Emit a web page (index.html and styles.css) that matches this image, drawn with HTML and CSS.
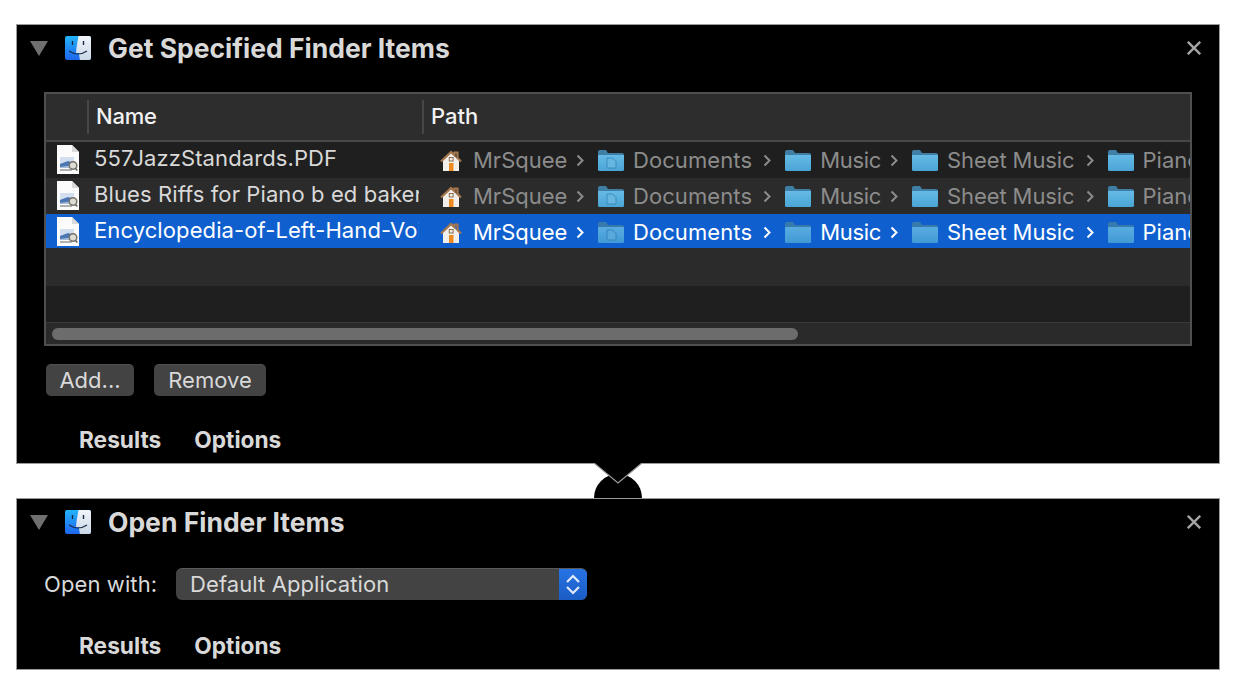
FILE: index.html
```html
<!DOCTYPE html>
<html lang="en">
<head>
    <meta charset="UTF-8">
    <title>Automator workflow</title>
    <link rel="stylesheet" href="styles.css">
</head>
<body>
    <svg class="defs" width="0" height="0">
        <defs>
            <linearGradient id="finderBlue" x1="0" y1="0" x2="0" y2="1">
                <stop offset="0" stop-color="#22b4fa"/>
                <stop offset="1" stop-color="#1e66ee"/>
            </linearGradient>
            <linearGradient id="finderPale" x1="0" y1="0" x2="0" y2="1">
                <stop offset="0" stop-color="#f1f5f9"/>
                <stop offset="1" stop-color="#c9d8e8"/>
            </linearGradient>
            <linearGradient id="folderFill" x1="0" y1="0" x2="0" y2="1">
                <stop offset="0" stop-color="#66bae4"/>
                <stop offset="1" stop-color="#4aa5d6"/>
            </linearGradient>
            <symbol id="finder" viewBox="0 0 26 24">
                <rect width="26" height="24" rx="2" fill="url(#finderBlue)"/>
                <path d="M13.500 0H24a2 2 0 0 1 2 2v20a2 2 0 0 1-2 2H15c-.6-2.800-.9-5-1-7h-3c.4-6 1.500-11 2.500-17z" fill="url(#finderPale)"/>
                <path d="M7.500 5v4M18.500 5v4" stroke="#1b2a44" stroke-width="1.400" fill="none"/>
                <path d="M4 15c5.500 3.800 12.500 3.800 18 0" stroke="#1b2a44" stroke-width="1.200" fill="none"/>
            </symbol>
            <symbol id="doc" viewBox="0 0 22 29">
                <path d="M0 0h15l7 7v22H0z" fill="#fbfbfb"/>
                <path d="M15 0l7 7h-7z" fill="#d9d9d9"/>
                <rect x="3" y="12" width="14" height="11" fill="#a9bedb"/>
                <path d="M3 12h14v4l-14 3z" fill="#d3dfee"/>
                <path d="M3 19l8-3 6 2v2l-14 2z" fill="#4d76b4"/>
                <path d="M3 24h12v2H3z" fill="#b0b0b0"/>
                <circle cx="16" cy="20.500" r="3.800" fill="#dcdcd4" stroke="#77746a" stroke-width="1.500"/>
                <path d="M18.500 23.500l1.800 2" stroke="#66635a" stroke-width="1.600"/>
            </symbol>
            <symbol id="home" viewBox="0 0 22 21">
                <path d="M3 10L11 3l8 7v11H3z" fill="#f2efea"/>
                <path d="M1 11.500L11 2l3.500 3.300V2.500h3v5.600L21 11.500" fill="none" stroke="#a5774e" stroke-width="2.200"/>
                <rect x="9" y="13" width="4.500" height="8" fill="#ec8a22"/>
                <rect x="9.300" y="7.500" width="3.800" height="3.500" fill="#f2efea" stroke="#8a6a4a" stroke-width="1"/>
            </symbol>
            <symbol id="folder" viewBox="0 0 26 22">
                <path d="M0 3a2 2 0 0 1 2-2h6l2 3h14a2 2 0 0 1 2 2v5H0z" fill="#3f7fa6"/>
                <path d="M0 6h26v14.500a1.500 1.500 0 0 1-1.500 1.500h-23A1.500 1.500 0 0 1 0 20.500z" fill="url(#folderFill)"/>
            </symbol>
            <symbol id="folderDoc" viewBox="0 0 26 22">
                <use href="#folder"/>
                <path d="M9 9h5.500L18 12.500V19H9z" fill="#66b6e0" stroke="#3a8cbd" stroke-width="1"/>
            </symbol>
            <symbol id="chevron" viewBox="0 0 8 13">
                <path d="M1.500 1.500L6.500 6.500 1.500 11.500" fill="none" stroke="currentColor" stroke-width="2"/>
            </symbol>
        </defs>
    </svg>

    <section class="action action-get">
        <header class="action-head">
            <span class="triangle"></span>
            <svg class="finder-icon"><use href="#finder"/></svg>
            <h2 class="action-title">Get Specified Finder Items</h2>
            <svg class="close-icon" viewBox="0 0 14 14"><path d="M.8 .8l12.400 12.400M13.200 .8L.8 13.200"/></svg>
        </header>

        <div class="table-frame">
            <div class="table-head">
                <div class="head-icon"></div>
                <div class="head-cell head-name">Name</div>
                <div class="head-cell head-path">Path</div>
            </div>

            <div class="row row-dark">
                <svg class="doc-icon"><use href="#doc"/></svg>
                <div class="name-cell">557JazzStandards.PDF</div>
                <div class="path-cell">
                    <svg class="home-icon"><use href="#home"/></svg><span class="crumb crumb-home">MrSquee</span><svg class="chev"><use href="#chevron"/></svg>
                    <svg class="folder-icon"><use href="#folderDoc"/></svg><span class="crumb crumb-docs">Documents</span><svg class="chev"><use href="#chevron"/></svg>
                    <svg class="folder-icon"><use href="#folder"/></svg><span class="crumb crumb-music">Music</span><svg class="chev"><use href="#chevron"/></svg>
                    <svg class="folder-icon"><use href="#folder"/></svg><span class="crumb crumb-sheet">Sheet Music</span><svg class="chev"><use href="#chevron"/></svg>
                    <svg class="folder-icon"><use href="#folder"/></svg><span class="crumb">Piano</span>
                </div>
            </div>
            <div class="row row-light">
                <svg class="doc-icon"><use href="#doc"/></svg>
                <div class="name-cell">Blues Riffs for Piano b ed baker</div>
                <div class="path-cell">
                    <svg class="home-icon"><use href="#home"/></svg><span class="crumb crumb-home">MrSquee</span><svg class="chev"><use href="#chevron"/></svg>
                    <svg class="folder-icon"><use href="#folderDoc"/></svg><span class="crumb crumb-docs">Documents</span><svg class="chev"><use href="#chevron"/></svg>
                    <svg class="folder-icon"><use href="#folder"/></svg><span class="crumb crumb-music">Music</span><svg class="chev"><use href="#chevron"/></svg>
                    <svg class="folder-icon"><use href="#folder"/></svg><span class="crumb crumb-sheet">Sheet Music</span><svg class="chev"><use href="#chevron"/></svg>
                    <svg class="folder-icon"><use href="#folder"/></svg><span class="crumb">Piano</span>
                </div>
            </div>
            <div class="row row-selected">
                <svg class="doc-icon"><use href="#doc"/></svg>
                <div class="name-cell">Encyclopedia-of-Left-Hand-Voicings</div>
                <div class="path-cell">
                    <svg class="home-icon"><use href="#home"/></svg><span class="crumb crumb-home">MrSquee</span><svg class="chev"><use href="#chevron"/></svg>
                    <svg class="folder-icon"><use href="#folderDoc"/></svg><span class="crumb crumb-docs">Documents</span><svg class="chev"><use href="#chevron"/></svg>
                    <svg class="folder-icon"><use href="#folder"/></svg><span class="crumb crumb-music">Music</span><svg class="chev"><use href="#chevron"/></svg>
                    <svg class="folder-icon"><use href="#folder"/></svg><span class="crumb crumb-sheet">Sheet Music</span><svg class="chev"><use href="#chevron"/></svg>
                    <svg class="folder-icon"><use href="#folder"/></svg><span class="crumb">Piano</span>
                </div>
            </div>
            <div class="row-empty row-empty-light"></div>
            <div class="row-empty row-empty-dark"></div>

            <div class="scroll-track"><div class="scroll-thumb"></div></div>
        </div>

        <div class="button-row">
            <button class="btn btn-add">Add...</button>
            <button class="btn btn-remove">Remove</button>
        </div>

        <div class="tabs">
            <span class="tab">Results</span>
            <span class="tab">Options</span>
        </div>

        <!-- Connector between the two actions -->
        <svg class="connector" viewBox="0 0 48 35" width="48" height="35">
            <circle cx="24" cy="35" r="24" fill="#000"/>
            <path d="M0 0h48L24 20z" fill="#000"/>
            <path d="M0 0L24 20 48 0" fill="none" stroke="#9a9a9a" stroke-width="1.200"/>
        </svg>
    </section>

    <section class="action action-open">
        <header class="action-head">
            <span class="triangle"></span>
            <svg class="finder-icon"><use href="#finder"/></svg>
            <h2 class="action-title">Open Finder Items</h2>
            <svg class="close-icon" viewBox="0 0 14 14"><path d="M.8 .8l12.400 12.400M13.200 .8L.8 13.200"/></svg>
        </header>

        <div class="open-row">
            <label class="open-label">Open with:</label>
            <div class="select">
                <span class="select-text">Default Application</span>
                <span class="select-arrows">
                    <svg viewBox="0 0 14 21" width="14" height="21"><path d="M1 8L7 2 13 8M1 13L7 19 13 13"/></svg>
                </span>
            </div>
        </div>

        <div class="tabs tabs-open">
            <span class="tab">Results</span>
            <span class="tab">Options</span>
        </div>
    </section>
</body>
</html>
```
FILE: styles.css
```css
body {
    margin: 0;
    padding: 24px 16px 0;
    background: #fff;
    font-family: "Inter", "Liberation Sans", sans-serif;
    color: #d9d9d9;
}

.defs {
    display: block;
    height: 0;
}

/* action blocks */
.action {
    position: relative;
    box-sizing: border-box;
    width: 1204px;
    background: #000;
    border: 1px solid #9c9c9c;
    padding: 0 27px 11px;
}

.action-open {
    margin-top: 34px;
}

.action-head {
    display: flex;
    align-items: center;
    height: 46px;
    margin-left: -14px;
}

.triangle {
    width: 0;
    height: 0;
    border-left: 9px solid transparent;
    border-right: 9px solid transparent;
    border-top: 15px solid #6f6f6f;
}

.finder-icon {
    width: 26px;
    height: 24px;
    margin-left: 17px;
}

.action-title {
    flex: 1;
    margin: 0 0 0 17px;
    font-size: 26.500px;
    font-weight: 700;
    color: #d9d9d9;
}

.close-icon {
    width: 14px;
    height: 14px;
    margin-right: -9px;
    fill: none;
    stroke: #a3a3a3;
    stroke-width: 2.400;
}

/* table */
.table-frame {
    box-sizing: border-box;
    width: 1148px;
    height: 254px;
    margin-top: 21px;
    border: 2px solid #4f4f4f;
    background: #2b2b2b;
}

.table-head {
    display: flex;
    height: 40px;
    padding-top: 6px;
    border-bottom: 2px solid #474747;
    background: #2d2d2d;
}

.head-icon {
    width: 41px;
}

.head-cell {
    height: 34px;
    line-height: 32px;
    padding-left: 7px;
    border-left: 2px solid #474747;
    font-size: 22px;
    font-weight: 500;
    color: #f2f2f2;
}

.head-name {
    width: 326px;
    letter-spacing: -.2px;
}

.row {
    display: flex;
    align-items: flex-start;
    overflow: hidden;
    height: 36px;
}

.row-dark {
    background: #1f1f1f;
}

.row-light {
    background: #2b2b2b;
}

.row-selected {
    height: 34px;
    background: #0f5fcf;
}

.doc-icon {
    flex: none;
    width: 22px;
    height: 29px;
    margin: 3px 0 0 11px;
}

.name-cell {
    flex: none;
    width: 325px;
    margin-left: 15px;
    overflow: hidden;
    white-space: nowrap;
    font-size: 22px;
    line-height: 32px;
    letter-spacing: .1px;
    color: #d9d9d9;
}

.path-cell {
    display: flex;
    align-items: flex-start;
    flex: 1;
    min-width: 0;
    overflow: hidden;
    padding-left: 21px;
    white-space: nowrap;
    font-size: 22px;
    line-height: 36px;
    color: #8c8c8c;
}

.row-selected .name-cell,
.row-selected .path-cell {
    color: #fff;
}

.row-selected .folder-icon {
    opacity: .85;
}

.home-icon {
    flex: none;
    width: 22px;
    height: 21px;
    margin-top: 8px;
}

.folder-icon {
    flex: none;
    width: 26px;
    height: 22px;
    margin-top: 7px;
}

.crumb {
    margin-left: 9px;
}

.crumb-home {
    margin: 0 -2.500px 0 11px;
}

.crumb-docs {
    letter-spacing: .1px;
}

.crumb-music {
    margin-right: -2px;
    letter-spacing: -.3px;
}

.crumb-sheet {
    letter-spacing: -.1px;
}

.chev {
    flex: none;
    width: 8px;
    height: 13px;
    margin: 12px 14px 0 11px;
}

.row-empty-light {
    height: 38px;
    background: #2b2b2b;
}

.row-empty-dark {
    height: 36px;
    background: #1f1f1f;
}

.scroll-track {
    box-sizing: border-box;
    height: 22px;
    padding: 5px 0 0 6px;
    border-top: 1px solid #3a3a3a;
    background: #2a2a2a;
}

.scroll-thumb {
    width: 746px;
    height: 12px;
    border-radius: 6px;
    background: #6c6c6c;
}

/* buttons */
.button-row {
    display: flex;
    gap: 20px;
    margin: 18px 0 0 2px;
}

.btn {
    height: 32px;
    padding: 0 0 2px;
    border: 0;
    border-top: 1px solid #4f4f4f;
    border-radius: 5px;
    background: #434343;
    color: #d9d9d9;
    font-family: inherit;
    font-size: 22px;
}

.btn-add {
    width: 88px;
}

.btn-remove {
    width: 112px;
}

/* tabs */
.tabs {
    display: flex;
    gap: 33px;
    height: 24px;
    margin: 32px 0 0 35px;
    line-height: 24px;
    font-size: 22.700px;
    font-weight: 700;
    color: #d9d9d9;
}

.tabs-open {
    margin-top: 34px;
}

/* connector sits over the gap between actions */
.connector {
    position: absolute;
    left: 577px;
    bottom: -35px;
    z-index: 2;
}

/* open finder items */
.open-row {
    display: flex;
    align-items: center;
    margin-top: 23px;
}

.open-label {
    width: 132px;
    font-size: 22px;
    letter-spacing: .1px;
}

.select {
    display: flex;
    justify-content: space-between;
    box-sizing: border-box;
    width: 411px;
    height: 32px;
    overflow: hidden;
    border-top: 1px solid #5a5a5a;
    border-radius: 6px;
    background: #434343;
}

.select-text {
    padding-left: 14px;
    font-size: 22px;
    line-height: 31px;
    letter-spacing: .1px;
}

.select-arrows {
    display: flex;
    align-items: center;
    justify-content: center;
    width: 28px;
    margin-top: -1px;
    background: linear-gradient(#2774e6, #1b5cc4);
}

.select-arrows path {
    fill: none;
    stroke: #dfe9fb;
    stroke-width: 2.200;
}
```
